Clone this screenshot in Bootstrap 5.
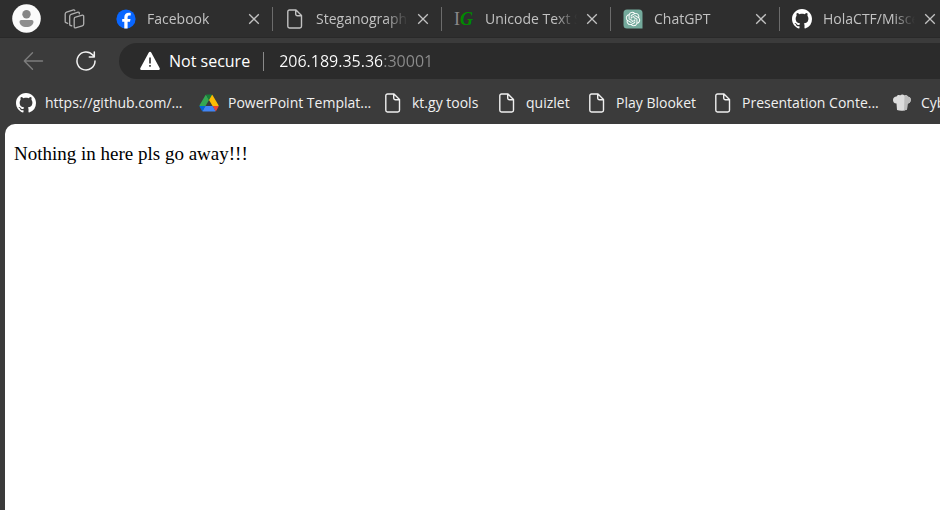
<!DOCTYPE html>
<html lang="en">
<head>
<meta charset="utf-8">
<meta name="viewport" content="width=device-width, initial-scale=1">
<title>206.189.35.36:30001</title>
<link href="https://cdn.jsdelivr.net/npm/bootstrap@5.3.0/dist/css/bootstrap.min.css" rel="stylesheet">
<style>
  body { background: #3b3b3b; color: #fff; font-family: "Open Sans", "Noto Sans", sans-serif; font-size: 14px; line-height: 20px; }
  svg { display: block; flex: none; }
  button { color: inherit; background: none; border: 0; padding: 0; }
  .tab-strip { background: #2e2e2e; height: 38px; border-bottom: 1px solid #292929; color: #c2c2c2; }
  .avatar { margin-left: 12px; }
  .workspaces { margin-left: 23px; margin-right: 19px; color: #b0b0b0; }
  .tab { width: 169px; height: 24px; padding: 0 11px 0 12px; border-right: 1px solid #6c6c6c; }
  .tab-name { color: inherit; margin-left: 11px; width: 92px; height: 20px; -webkit-mask-image: linear-gradient(90deg, #000 70px, transparent 92px); mask-image: linear-gradient(90deg, #000 70px, transparent 92px); }
  .favicon { width: 20px; }
  .letters { font: 18px/20px "Liberation Serif", serif; color: #8a8a8a; }
  .letters b { color: #008a00; font-style: italic; }
  .toolbar-row { padding: 5px 0 5px 22px; }
  .reload { margin: 0 23px 0 32px; }
  .address { background: #2b2b2b; height: 36px; border-radius: 18px 0 0 18px; padding-left: 21px; font-size: 16px; }
  .security { margin-left: 9px; }
  .rule { width: 1px; height: 19px; background: #8a8a8a; margin: 0 15px 0 13px; }
  .url { border: 0; outline: 0; padding: 0; min-width: 0; color: transparent; background: linear-gradient(90deg, #fff 103px, #8c8c8c 103px); -webkit-background-clip: text; background-clip: text; }
  .bookmarks { display: grid; grid-template-columns: 183px 184px 114px 90px 126px 179px 70px; height: 38px; margin-bottom: 2px; padding-left: 16px; overflow: hidden; }
  .bookmarks a { color: #f0f0f0; gap: 9px; }
  .page { background: #fff; color: #000; margin-left: 5px; border-radius: 10px 0 0 0; padding: 19px 9px; font: 19px/22px "Liberation Serif", serif; }
</style>
<script src="https://cdn.jsdelivr.net/npm/bootstrap@5.3.0/dist/js/bootstrap.bundle.min.js"></script>
</head>
<body class="vh-100 d-flex flex-column overflow-hidden">
<svg width="0" height="0" class="position-absolute" aria-hidden="true">
  <symbol id="github" viewBox="0 0 16 16"><path fill="#fff" d="M8 0C3.58 0 0 3.58 0 8c0 3.54 2.29 6.53 5.47 7.59.4.07.55-.17.55-.38 0-.19-.01-.82-.01-1.49-2.01.37-2.53-.49-2.69-.94-.09-.23-.48-.94-.82-1.13-.28-.15-.68-.52-.01-.53.63-.01 1.08.58 1.23.82.72 1.21 1.87.87 2.33.66.07-.52.28-.87.51-1.07-1.78-.2-3.64-.89-3.64-3.95 0-.87.31-1.59.82-2.15-.08-.2-.36-1.02.08-2.12 0 0 .67-.21 2.2.82.64-.18 1.32-.27 2-.27s1.36.09 2 .27c1.53-1.04 2.2-.82 2.2-.82.44 1.1.16 1.92.08 2.12.51.56.82 1.27.82 2.15 0 3.07-1.87 3.75-3.65 3.95.29.25.54.73.54 1.48 0 1.07-.01 1.93-.01 2.2 0 .21.15.46.55.38A8.01 8.01 0 0 0 16 8c0-4.42-3.58-8-8-8"/></symbol>
  <symbol id="doc" viewBox="0 0 20 20"><path fill="none" stroke="currentColor" stroke-width="1.4" stroke-linejoin="round" d="M4.5 1H11l5.500 5.500v10.800a1.700 1.700 0 0 1-1.700 1.700H4.500a1.700 1.700 0 0 1-1.700-1.700V2.700A1.700 1.700 0 0 1 4.500 1zM10.700 1.200v3.800a1.700 1.700 0 0 0 1.700 1.700h3.900"/></symbol>
  <symbol id="close" viewBox="0 0 14 14"><path fill="none" stroke="currentColor" stroke-width="1.3" d="M2.200 2.200l9.600 9.600M11.800 2.200l-9.600 9.600"/></symbol>
</svg>

<header>
  <nav class="tab-strip d-flex align-items-center overflow-hidden" aria-label="Tabs">
    <button class="avatar" aria-label="Profile"><svg width="29" height="29" viewBox="0 0 29 29"><circle cx="14.500" cy="14.500" r="14.300" fill="#fafafa"/><circle cx="14.500" cy="10.200" r="4.200" fill="#858585"/><path fill="#8d8d8d" d="M9.200 16h10.600a1.700 1.700 0 0 1 1.700 1.700c0 3-3 5.300-7 5.300s-7-2.300-7-5.300A1.700 1.700 0 0 1 9.200 16z"/></svg></button>
    <button class="workspaces" aria-label="Workspaces"><svg width="21" height="20" viewBox="0 0 21 20"><g fill="none" stroke="currentColor" stroke-width="1.300" stroke-linejoin="round" stroke-linecap="round"><path d="M11.500 8.200l7-2a1 1 0 0 1 1.200 1v7.800a2 2 0 0 1-1.400 1.900l-6.800 2a1 1 0 0 1-1.300-1V9.900a1.700 1.700 0 0 1 1.300-1.700z"/><path d="M7.800 16.800l-1.200-.3a1 1 0 0 1-.9-1V7.200A2 2 0 0 1 7.100 5.300l6.900-2.100a1 1 0 0 1 1.300 1v.6"/><path d="M3.700 14.300l-1.800-.6a1 1 0 0 1-.7-1V5a2 2 0 0 1 1.400-1.900l6.900-2.200a1 1 0 0 1 1.300.8"/></g></svg></button>

    <div class="tab d-flex align-items-center flex-shrink-0">
      <svg width="20" height="20" viewBox="0 0 20 20"><circle cx="10" cy="10" r="9.600" fill="#0866ff"/><path fill="#fff" d="M8.300 19.500v-6.700H6.200V9.900h2.100V8.500c0-3.300 1.500-4.800 4.700-4.800.6 0 1.300.1 1.700.2v2.700c-.3 0-.6-.1-1-.1-1.600 0-2.100.6-2.100 2.100v1.300h2.900l-.5 2.900h-2.400v6.700z"/></svg>
      <a href="#" class="tab-name text-decoration-none text-nowrap overflow-hidden">Facebook</a>
      <button class="ms-auto" aria-label="Close Facebook"><svg width="14" height="14"><use href="#close"/></svg></button>
    </div>
    <div class="tab d-flex align-items-center flex-shrink-0">
      <svg width="20" height="20"><use href="#doc"/></svg>
      <a href="#" class="tab-name text-decoration-none text-nowrap overflow-hidden">Steganography</a>
      <button class="ms-auto" aria-label="Close Steganography"><svg width="14" height="14"><use href="#close"/></svg></button>
    </div>
    <div class="tab d-flex align-items-center flex-shrink-0">
      <span class="favicon letters text-nowrap">I<b>G</b></span>
      <a href="#" class="tab-name text-decoration-none text-nowrap overflow-hidden">Unicode Text S</a>
      <button class="ms-auto" aria-label="Close Unicode Text"><svg width="14" height="14"><use href="#close"/></svg></button>
    </div>
    <div class="tab d-flex align-items-center flex-shrink-0">
      <svg width="20" height="20" viewBox="0 0 20 20"><path fill="#74aa9c" d="M4 .5h12A3.500 3.500 0 0 1 19.500 4v15.500H4A3.500 3.500 0 0 1 .5 16V4A3.500 3.500 0 0 1 4 .5z"/><path fill="#fff" transform="translate(2.800 2.800) scale(.6)" d="M22.2819 9.8211a5.9847 5.9847 0 0 0-.5157-4.9108 6.0462 6.0462 0 0 0-6.5098-2.9A6.0651 6.0651 0 0 0 4.9807 4.1818a5.9847 5.9847 0 0 0-3.9977 2.9 6.0462 6.0462 0 0 0 .7427 7.0966 5.98 5.98 0 0 0 .511 4.9107 6.051 6.051 0 0 0 6.5146 2.9001A5.9847 5.9847 0 0 0 13.2599 24a6.0557 6.0557 0 0 0 5.7718-4.2058 5.9894 5.9894 0 0 0 3.9977-2.9001 6.0557 6.0557 0 0 0-.7475-7.0729zm-9.022 12.6081a4.4755 4.4755 0 0 1-2.8764-1.0408l.1419-.0804 4.7783-2.7582a.7948.7948 0 0 0 .3927-.6813v-6.7369l2.02 1.1686a.071.071 0 0 1 .038.052v5.5826a4.504 4.504 0 0 1-4.4945 4.4944zm-9.6607-4.1254a4.4708 4.4708 0 0 1-.5346-3.0137l.142.0852 4.783 2.7582a.7712.7712 0 0 0 .7806 0l5.8428-3.3685v2.3324a.0804.0804 0 0 1-.0332.0615L9.74 19.9502a4.4992 4.4992 0 0 1-6.1408-1.6464zM2.3408 7.8956a4.485 4.485 0 0 1 2.3655-1.9728V11.6a.7664.7664 0 0 0 .3879.6765l5.8144 3.3543-2.0201 1.1685a.0757.0757 0 0 1-.071 0l-4.8303-2.7865A4.504 4.504 0 0 1 2.3408 7.872zm16.5963 3.8558L13.1038 8.364 15.1192 7.2a.0757.0757 0 0 1 .071 0l4.8303 2.7913a4.4944 4.4944 0 0 1-.6765 8.1042v-5.6772a.79.79 0 0 0-.407-.667zm2.0107-3.0231l-.142-.0852-4.7735-2.7818a.7759.7759 0 0 0-.7854 0L9.409 9.2297V6.8974a.0662.0662 0 0 1 .0284-.0615l4.8303-2.7866a4.4992 4.4992 0 0 1 6.6802 4.66zM8.3065 12.863l-2.02-1.1638a.0804.0804 0 0 1-.038-.0567V6.0742a4.4992 4.4992 0 0 1 7.3757-3.4537l-.142.0805L8.704 5.459a.7948.7948 0 0 0-.3927.6813zm1.0976-2.3654l2.602-1.4998 2.6069 1.4998v2.9994l-2.5974 1.4997-2.6067-1.4997Z"/></svg>
      <a href="#" class="tab-name text-decoration-none text-nowrap overflow-hidden">ChatGPT</a>
      <button class="ms-auto" aria-label="Close ChatGPT"><svg width="14" height="14"><use href="#close"/></svg></button>
    </div>
    <div class="tab d-flex align-items-center flex-shrink-0">
      <svg width="20" height="20"><use href="#github"/></svg>
      <a href="#" class="tab-name text-decoration-none text-nowrap overflow-hidden">HolaCTF/Misce</a>
      <button class="ms-auto" aria-label="Close HolaCTF"><svg width="14" height="14"><use href="#close"/></svg></button>
    </div>
  </nav>

  <div class="toolbar-row d-flex align-items-center">
    <button aria-label="Back"><svg width="22" height="20" viewBox="0 0 22 20"><path fill="none" stroke="#7d7d7d" stroke-width="1.400" stroke-linecap="round" stroke-linejoin="round" d="M20.500 10H2.500M10.500 1.800L2.300 10l8.200 8.200"/></svg></button>
    <button class="reload" aria-label="Reload"><svg width="20" height="20" viewBox="0 0 20 20"><path fill="none" stroke="#f2f2f2" stroke-width="1.500" stroke-linecap="round" stroke-linejoin="round" d="M19 10a9 9 0 1 1-2.200-5.900L18.300 5.900M18.300 1v5h-5"/></svg></button>
    <div class="address d-flex align-items-center flex-grow-1">
      <svg width="20" height="20" viewBox="0 0 20 20"><path fill="#fff" d="M8.800 1.500a1.400 1.400 0 0 1 2.400 0l8.400 15.500a1.400 1.400 0 0 1-1.200 2.100H1.600A1.400 1.400 0 0 1 .4 17z"/><path stroke="#2b2b2b" stroke-width="1.600" d="M10 6.500v6M10 14v1.800"/></svg>
      <label for="url" class="security text-nowrap">Not secure</label>
      <span class="rule"></span>
      <input id="url" class="url flex-grow-1" type="text" value="206.189.35.36:30001">
    </div>
  </div>

  <nav class="bookmarks align-items-center text-nowrap" aria-label="Bookmarks">
    <a href="#" class="d-flex align-items-center text-decoration-none"><svg width="20" height="20"><use href="#github"/></svg>https://github.com/...</a>
    <a href="#" class="d-flex align-items-center text-decoration-none"><svg width="20" height="20" viewBox="-2 -4 91 86"><path fill="#0066da" d="m6.600 66.850 3.850 6.650c.8 1.400 1.950 2.500 3.300 3.300l13.750-23.800h-27.500c0 1.550.4 3.100 1.200 4.500z"/><path fill="#34a853" d="m43.650 25-13.750-23.800c-1.350.8-2.500 1.900-3.300 3.300l-25.400 44a9.060 9.060 0 0 0-1.200 4.500h27.500z"/><path fill="#ea4335" d="m73.550 76.800c1.350-.8 2.500-1.900 3.300-3.300l1.600-2.750 7.650-13.250c.8-1.400 1.200-2.950 1.200-4.500h-27.502l5.852 11.500z"/><path fill="#188038" d="m43.650 25 13.750-23.800c-1.350-.8-2.900-1.200-4.500-1.200h-18.500c-1.600 0-3.150.45-4.500 1.200z"/><path fill="#4285f4" d="m59.800 53h-32.300l-13.750 23.800c1.350.8 2.900 1.200 4.500 1.200h50.800c1.600 0 3.150-.45 4.500-1.200z"/><path fill="#fbbc04" d="m73.400 26.500-12.700-22c-.8-1.400-1.950-2.500-3.300-3.300l-13.750 23.800 16.150 28h27.450c0-1.550-.4-3.100-1.200-4.500z"/></svg>PowerPoint Templat...</a>
    <a href="#" class="d-flex align-items-center text-decoration-none"><svg width="20" height="20"><use href="#doc"/></svg>kt.gy tools</a>
    <a href="#" class="d-flex align-items-center text-decoration-none"><svg width="20" height="20"><use href="#doc"/></svg>quizlet</a>
    <a href="#" class="d-flex align-items-center text-decoration-none"><svg width="20" height="20"><use href="#doc"/></svg>Play Blooket</a>
    <a href="#" class="d-flex align-items-center text-decoration-none"><svg width="20" height="20"><use href="#doc"/></svg>Presentation Conte...</a>
    <a href="#" class="d-flex align-items-center text-decoration-none"><svg width="20" height="20" viewBox="0 0 20 20"><path fill="#dcdcdc" d="M4.500 10.500C2 10.500 1 8.800 1 7c0-2.200 1.700-3.600 3.600-3.500C5.500 2 7 1.800 8 2.400c1.300-1.200 3.300-1.200 4.500 0 1.500-.5 3 0 3.600 1.300 1.700.1 2.900 1.500 2.700 3.300 0 2-1.400 3.300-3.200 3.500L15 16.500c-3 1.700-7 1.700-10 .6z"/><path fill="#bcbcbc" d="M12.500 2.400c1.500-.5 3 0 3.600 1.300 1.700.1 2.900 1.500 2.700 3.300 0 2-1.400 3.300-3.200 3.500L15 16.500l-3 1z"/></svg>CyberChef</a>
  </nav>
</header>

<main class="page flex-grow-1">Nothing in here pls go away!!!</main>
</body>
</html>
